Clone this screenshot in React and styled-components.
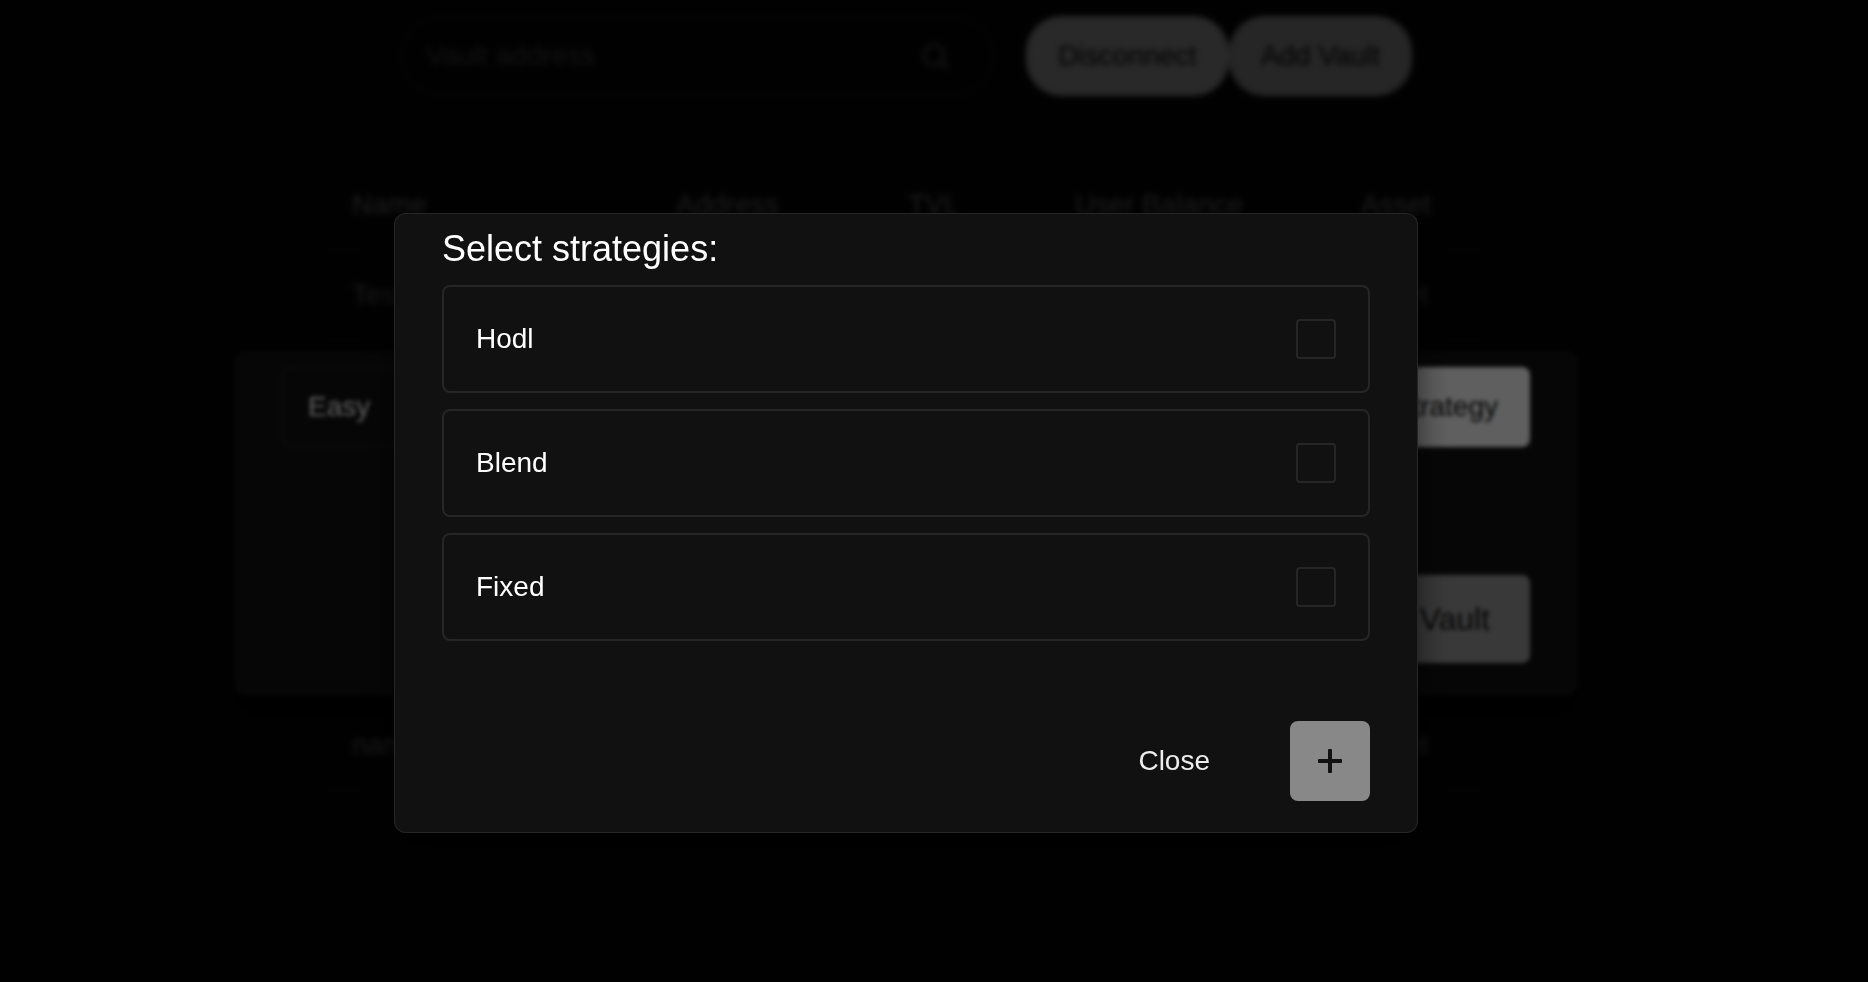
import React from "react";
import styled, { createGlobalStyle } from "styled-components";

const GlobalStyle = createGlobalStyle`
  *, *::before, *::after { box-sizing: border-box; }
  body {
    margin: 0;
    background: #0a0a0a;
    color: #ededed;
    font-family: "Liberation Sans", Arial, sans-serif;
    font-size: 28px;
    line-height: 40px;
  }
  button, input { font: inherit; color: inherit; }
`;

const Page = styled.main`
  min-height: 100vh;
  padding: 16px 56px 16px 0;
  display: flex;
  flex-direction: column;
  align-items: center;
  gap: 64px;
`;

const Toolbar = styled.div`
  display: flex;
  gap: 32px;
  width: 100%;
  max-width: 1012px;
`;

const SearchField = styled.label`
  flex: 1;
  min-width: 0;
  height: 80px;
  padding: 0 44px 0 24px;
  display: flex;
  align-items: center;
  border: 2px solid #1c1c1c;
  border-radius: 40px;
  color: #747474;
`;

const SearchInput = styled.input`
  flex: 1;
  min-width: 0;
  padding: 0;
  border: 0;
  outline: 0;
  background: transparent;
  &::placeholder { color: #747474; opacity: 1; }
`;

const ButtonGroup = styled.div`
  display: flex;
`;

const Button = styled.button`
  height: ${(p) => (p.$large ? 88 : 80)}px;
  padding: 0 ${(p) => (p.$large ? 40 : 32)}px;
  border: 0;
  border-radius: ${(p) => (p.$pill ? 36 : 8)}px;
  background: ${(p) => p.$fill || "#ededed"};
  color: #111111;
  font-size: ${(p) => (p.$large ? 32 : 28)}px;
  white-space: nowrap;
  cursor: pointer;
`;

const GhostButton = styled(Button)`
  padding: 0 48px;
  background: transparent;
  color: #ededed;
`;

const IconButton = styled(Button)`
  width: 80px;
  padding: 0;
  display: grid;
  place-items: center;
`;

const VaultTable = styled.table`
  width: 100%;
  max-width: 1156px;
  table-layout: fixed;
  border-collapse: collapse;
  text-align: left;
`;

const HeadCell = styled.th`
  width: ${(p) => p.$width}px;
  height: 90px;
  padding: 0 24px;
  border-bottom: 2px solid #161616;
  color: #b0b0b0;
  font-weight: 400;
  white-space: nowrap;
`;

const Cell = styled.td`
  height: 90px;
  padding: 0 24px;
  border-bottom: 2px solid #161616;
  color: #a0a0a0;
`;

const Overlay = styled.div`
  position: fixed;
  inset: 0;
  padding: 64px 56px 0 0;
  display: grid;
  justify-items: center;
  align-items: center;
  background: rgba(0, 0, 0, 0.6);
  backdrop-filter: blur(2px);
`;

const Dialog = styled.section`
  width: 100%;
  max-width: ${(p) => p.$width}px;
  border-radius: 12px;
  background: #111111;
  box-shadow: 0 20px 32px rgba(0, 0, 0, 0.6);
`;

const VaultDialog = styled(Dialog)`
  min-height: 344px;
  padding: 16px 48px 32px;
  display: flex;
  flex-direction: column;
  justify-content: space-between;
`;

const FormRow = styled.div`
  display: flex;
  justify-content: ${(p) => (p.$end ? "flex-end" : "space-between")};
  gap: 32px;
`;

const NameInput = styled.input`
  flex: 1;
  min-width: 0;
  height: 80px;
  padding: 0 24px;
  border: 2px solid #1c1c1c;
  border-radius: 8px;
  background: transparent;
`;

const StrategyDialog = styled(Dialog)`
  padding: 16px 48px 32px;
  box-shadow: inset 0 0 0 1px #262626, 0 20px 32px rgba(0, 0, 0, 0.6);
`;

const Title = styled.h2`
  margin: 0 0 16px;
  color: #ffffff;
  font-size: 36px;
  font-weight: 400;
  line-height: 40px;
`;

const StrategyList = styled.div`
  display: flex;
  flex-direction: column;
  gap: 16px;
`;

const StrategyRow = styled.label`
  height: 108px;
  padding: 0 32px;
  display: flex;
  align-items: center;
  justify-content: space-between;
  border: 2px solid #262626;
  border-radius: 8px;
  color: #ffffff;
  cursor: pointer;
`;

const Checkbox = styled.input`
  appearance: none;
  width: 40px;
  height: 40px;
  margin: 0;
  border: 2px solid #262626;
  border-radius: 4px;
  &:checked { background: #888888; }
`;

const Footer = styled.footer`
  margin-top: 80px;
  display: flex;
  justify-content: flex-end;
  gap: 32px;
`;

const SearchIcon = () => (
  <svg width="26" height="28" viewBox="0 0 26 28" fill="none" stroke="currentColor" strokeWidth="3" aria-hidden="true">
    <circle cx="12" cy="13" r="10" />
    <path d="M19 20l5 5" strokeLinecap="round" strokeWidth="4" />
  </svg>
);

const PlusIcon = () => (
  <svg width="24" height="24" viewBox="0 0 24 24" fill="currentColor" aria-hidden="true">
    <rect x="10" y="0" width="4" height="24" rx="1" />
    <rect x="0" y="10" width="24" height="4" rx="1" />
  </svg>
);

const columns = [
  ["Name", 324],
  ["Address", 232],
  ["TVL", 167],
  ["User Balance", 286],
  ["Asset", 147],
];

const vaults = [
  { name: "Test", asset: "asset" },
  {},
  {},
  {},
  {},
  { name: "name", asset: "asset" },
];
const strategies = ["Hodl", "Blend", "Fixed"];

export default function App() {
  return (
    <>
      <GlobalStyle />
      <Page>
        <Toolbar>
          <SearchField>
            <SearchInput type="text" placeholder="Vault address" aria-label="Vault address" />
            <SearchIcon />
          </SearchField>
          <ButtonGroup>
            <Button $pill $fill="#ffffff">Disconnect</Button>
            <Button $pill>Add Vault</Button>
          </ButtonGroup>
        </Toolbar>
        <VaultTable>
          <thead>
            <tr>
              {columns.map(([label, width]) => (
                <HeadCell key={label} $width={width}>{label}</HeadCell>
              ))}
            </tr>
          </thead>
          <tbody>
            {vaults.map((vault, i) => (
              <tr key={i}>
                <Cell>{vault.name}</Cell>
                <Cell />
                <Cell />
                <Cell />
                <Cell>{vault.asset}</Cell>
              </tr>
            ))}
          </tbody>
        </VaultTable>
      </Page>

      <Overlay>
        <VaultDialog role="dialog" aria-label="Add Vault" $width={1344}>
          <FormRow>
            <NameInput type="text" defaultValue="Easy" aria-label="Name" />
            <Button>Add Strategy</Button>
          </FormRow>
          <FormRow $end>
            <Button $large $fill="#8e8e8e">Add Vault</Button>
          </FormRow>
        </VaultDialog>
      </Overlay>

      <Overlay>
        <StrategyDialog role="dialog" aria-modal="true" aria-labelledby="strategy-title" $width={1024}>
          <Title id="strategy-title">Select strategies:</Title>
          <StrategyList>
            {strategies.map((name) => (
              <StrategyRow key={name}>
                {name}
                <Checkbox type="checkbox" />
              </StrategyRow>
            ))}
          </StrategyList>
          <Footer>
            <GhostButton>Close</GhostButton>
            <IconButton $fill="#888888" aria-label="Add">
              <PlusIcon />
            </IconButton>
          </Footer>
        </StrategyDialog>
      </Overlay>
    </>
  );
}
